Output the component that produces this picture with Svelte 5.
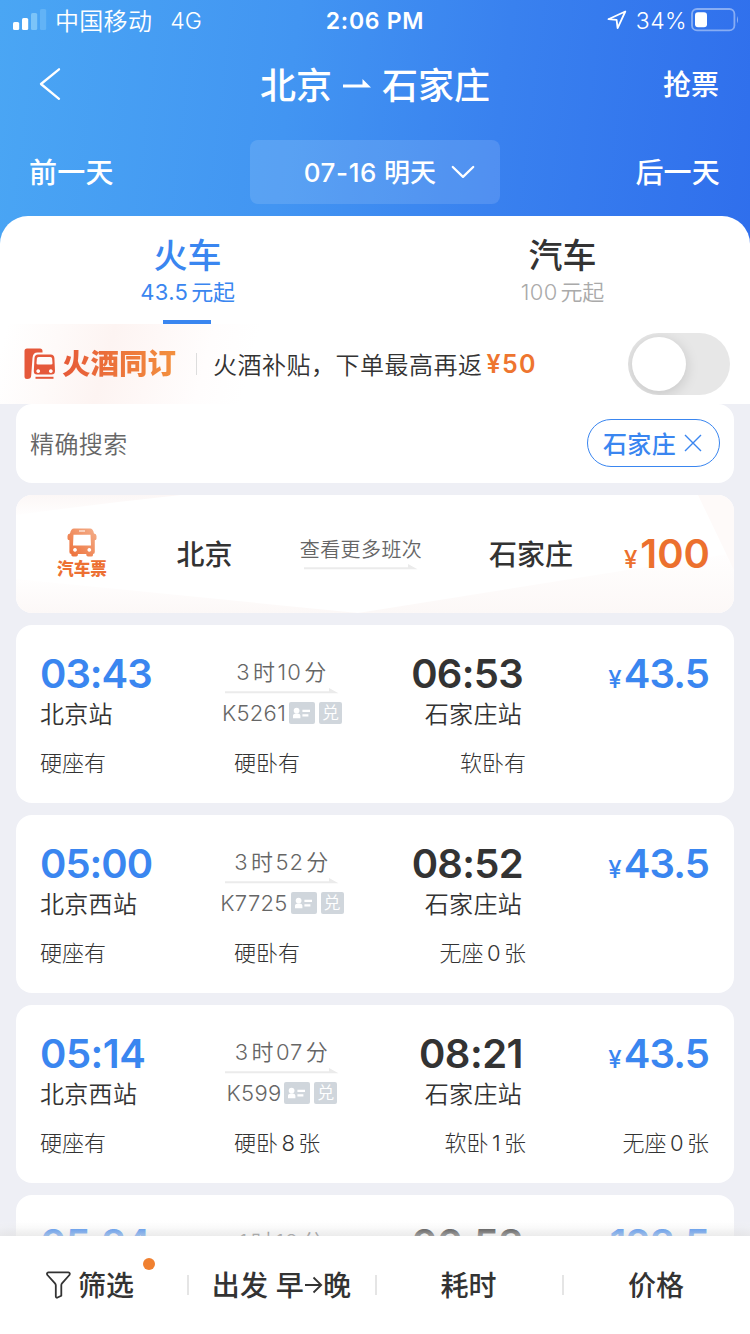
<script>
  const trains = [
    { dep: '03:43', arr: '06:53', dur: '3时10分', from: '北京站', to: '石家庄站', no: 'K5261', price: '43.5', seats: ['硬座有', '硬卧有', '软卧有'] },
    { dep: '05:00', arr: '08:52', dur: '3时52分', from: '北京西站', to: '石家庄站', no: 'K7725', price: '43.5', seats: ['硬座有', '硬卧有', '无座0张'] },
    { dep: '05:14', arr: '08:21', dur: '3时07分', from: '北京西站', to: '石家庄站', no: 'K599', price: '43.5', seats: ['硬座有', '硬卧8张', '软卧1张', '无座0张'] },
    { dep: '05:24', arr: '06:53', dur: '1时12分', price: '128.5' }
  ];
  const parts = (s) => s.match(/\d+|[^\d]+/g) ?? [];
</script>

{#snippet mixed(text)}
  {#each parts(text) as p}<span class:num={/\d/.test(p)}>{p}</span>{/each}
{/snippet}

{#snippet arrow()}
  <svg class="line" width="114" height="6" viewBox="0 0 114 6"><path d="M0 3.2H104V0L113.5 5.2H0Z" fill="#ebebeb" /></svg>
{/snippet}

<div class="page">
  <div class="top">
    <div class="status">
      <div class="carrier">
        <svg width="34" height="22" viewBox="0 0 34 22">
          <rect x="0" y="13" width="6.2" height="8" rx="1.6" fill="#fff" />
          <rect x="9" y="9" width="6.2" height="12" rx="1.6" fill="#fff" />
          <rect x="18" y="4" width="6.2" height="17" rx="1.6" fill="#7cc4f8" />
          <rect x="27" y="0" width="6.2" height="21" rx="1.6" fill="#62b3f6" />
        </svg>
        <span class="op">中国移动</span><span class="net">4G</span>
      </div>
      <span class="clock">2:06 PM</span>
      <div class="power">
        <svg width="20" height="20" viewBox="0 0 20 20" fill="none" stroke="#fff" stroke-width="1.8" stroke-linejoin="round"><path d="M18.3 1.5L1.4 9.2L9.6 9.9L10.6 18.2Z" /></svg>
        <span class="pct">34%</span>
        <svg width="49" height="24" viewBox="0 0 49 24">
          <rect x="1" y="1" width="42.4" height="21.4" rx="5" fill="none" stroke="#fff" stroke-opacity=".42" stroke-width="1.8" />
          <rect x="4" y="4.2" width="12" height="15" rx="3" fill="#fff" />
          <path d="M46 8q2 3.8 0 7.6z" fill="#fff" fill-opacity=".45" />
        </svg>
      </div>
    </div>
    <div class="title">
      <svg class="back" width="22" height="34" viewBox="0 0 22 34" fill="none" stroke="#fff" stroke-width="2.3" stroke-linecap="round" stroke-linejoin="round"><path d="M20 2.3L2 17L20 31.8" /></svg>
      <div class="route"><span>北京</span><svg width="28" height="10" viewBox="0 0 28 10"><path d="M0 5.6H19.5V0L28 8.6H0Z" fill="#fff" /></svg><span>石家庄</span></div>
      <span class="grab">抢票</span>
    </div>
    <div class="dates">
      <span class="day">前一天</span>
      <div class="picker"><span class="date"><i>07-16</i> 明天</span><svg width="24" height="14" viewBox="0 0 24 14" fill="none" stroke="#fff" stroke-width="2.3" stroke-linecap="round" stroke-linejoin="round"><path d="M1.8 2L12 11.8L22.2 2" /></svg></div>
      <span class="day next">后一天</span>
    </div>
    <div class="tabs">
      <div class="tab active"><b>火车</b><span class="from"><i>43.5</i>元起</span><div class="bar"></div></div>
      <div class="tab"><b>汽车</b><span class="from"><i>100</i>元起</span></div>
    </div>
  </div>

  <div class="promo">
    <svg width="31" height="32" viewBox="0 0 31 32">
      <path d="M3 .5H16Q18.5 .5 18.5 3V4.6H13.5Q9 4.6 8.5 10L7.2 27.5Q7.2 31 3 31Q.5 31 .5 28.5V3Q.5 .5 3 .5Z" fill="#e5583a" />
      <path fill-rule="evenodd" d="M14 6.5H26.8Q30 6.5 30.4 10L31 23Q31 26.6 27.5 26.6H13Q9.7 26.6 9.8 23L10.5 10Q10.8 6.5 14 6.5ZM14.5 9Q13 9 12.9 10.5L12.5 15.2Q12.4 16.6 14 16.6H27Q28.6 16.6 28.5 15.2L28.1 10.5Q28 9 26.4 9ZM14.2 21.2a1.9 1.9 0 1 0 .01 0M26.8 21.2a1.9 1.9 0 1 0 .01 0" fill="#e5583a" />
      <path d="M11.5 28.8H29.5V30.8H11.5Z" fill="#e5583a" />
    </svg>
    <span class="brand">火酒同订</span>
    <div class="sep"></div>
    <span class="desc">火酒补贴，下单最高再返</span><span class="fifty">¥50</span>
    <div class="switch"><div class="knob"></div></div>
  </div>

  <div class="list">
    <div class="search">
      <span class="hint">精确搜索</span>
      <div class="chip"><span>石家庄</span><svg width="18" height="18" viewBox="0 0 18 18" stroke="#3a86f0" stroke-width="1.4"><path d="M1 1L17 17M17 1L1 17" /></svg></div>
    </div>

    <div class="bus">
      <svg class="deco" width="718" height="118" viewBox="0 0 718 118">
        <defs>
          <linearGradient id="up" x1="0" y1="0" x2="0" y2="1"><stop offset="0" stop-color="#fcf7f6" /><stop offset="1" stop-color="#fffefe" /></linearGradient>
          <linearGradient id="down" x1="0" y1="0" x2="0" y2="1"><stop offset="0" stop-color="#fffefe" /><stop offset="1" stop-color="#fcf8f7" /></linearGradient>
        </defs>
        <path d="M0 0H165Q80 9 0 20Z" fill="url(#up)" />
        <path d="M0 84L342 118H0Z" fill="url(#down)" />
        <path d="M342 118L718 58V118Z" fill="url(#down)" />
        <path d="M682 0H718V75Z" fill="#fefaf9" />
      </svg>
      <div class="kind">
        <svg width="30" height="29" viewBox="0 0 30 29">
          <defs><linearGradient id="bus" x1="1" y1="0" x2="0" y2="1"><stop offset="0" stop-color="#f4b08c" /><stop offset="1" stop-color="#ed6d35" /></linearGradient></defs>
          <path fill-rule="evenodd" d="M7 .5H23Q26 .5 27 5.5Q29.5 5.8 29.5 8V10.5Q29.5 12.2 27.8 12.3V24Q27.8 26 26 26V27Q26 28.5 24.3 28.5H21Q19.2 28.5 19.2 26H11Q11 28.5 9.2 28.5H6Q4.2 28.5 4.2 26Q2.4 26 2.4 24V12.3Q.5 12.2 .5 10.5V8Q.5 5.8 3 5.5Q4 .5 7 .5ZM12 2.5V3.5H18V2.5ZM6.5 6.8L6 17.5H24L23.5 6.8ZM8 20a1.9 1.9 0 1 0 .01 0M22.3 20a1.9 1.9 0 1 0 .01 0" fill="url(#bus)" />
        </svg>
        <span>汽车票</span>
      </div>
      <span class="city a">北京</span>
      <div class="more"><span>查看更多班次</span>{@render arrow()}</div>
      <span class="city b">石家庄</span>
      <span class="price orange"><small>¥</small>100</span>
    </div>

    {#each trains as t}
      <div class="card">
        <div class="info">
          <div class="col">
            <span class="time blue" class:wide={t.dep.includes('1')}>{t.dep}</span>
            {#if t.from}<span class="station">{t.from}</span>{/if}
          </div>
          <div class="col mid">
            <span class="dur">{@render mixed(t.dur)}</span>
            {#if t.no}
              {@render arrow()}
              <div class="code"><span>{t.no}</span>
                <svg width="26" height="22" viewBox="0 0 26 22"><rect width="26" height="22" rx="2" fill="#d0d6dc" /><circle cx="7.6" cy="8.6" r="2.9" fill="#fff" /><path d="M4 16.2v-2.6q0-1.4 2.4-2h2.6q2.4.6 2.4 2v2.6zM13.4 7.8h7.6v2.2h-7.6zM13.4 12.2h6v2.2h-6z" fill="#fff" /></svg>
                <em>兑</em>
              </div>
            {/if}
          </div>
          <div class="col right">
            <span class="time" class:wide={t.arr.includes('1')}>{t.arr}</span>
            {#if t.to}<span class="station">{t.to}</span>{/if}
          </div>
          <span class="price blue"><small>¥</small>{t.price}</span>
        </div>
        {#if t.seats}
          <div class="seats">
            {#each t.seats as s}<div>{@render mixed(s)}</div>{/each}
          </div>
        {/if}
      </div>
    {/each}
  </div>

  <div class="nav">
    <div class="item first">
      <svg width="25" height="28" viewBox="0 0 25 28" fill="none" stroke="#333" stroke-width="1.8" stroke-linejoin="round"><path d="M2.4 1.4H22.3Q24.6 1.8 23.4 4L16 12.3Q15.3 13.2 15.3 14.3V24.8L11 26.8Q9.8 26.8 9.8 25.6V14.3Q9.8 13.2 9 12.3L1.4 4Q.2 1.8 2.4 1.4Z" /></svg>
      <span>筛选</span><div class="dot"></div>
    </div>
    <div class="rule"></div>
    <div class="item sort"><span>出发 早</span><svg width="18" height="18" viewBox="0 0 18 18" fill="none" stroke="#333" stroke-width="1.8"><path d="M0 9H16M8.5 1.5L16.2 9L8.5 16.5" /></svg><span>晚</span></div>
    <div class="rule"></div>
    <div class="item"><span>耗时</span></div>
    <div class="rule"></div>
    <div class="item"><span>价格</span></div>
  </div>
</div>

<style>
  :global(body) { margin: 0; }
  .page { width: 750px; height: 1334px; overflow: hidden; display: flex; flex-direction: column; font-family: Inter, "Noto Sans CJK SC", sans-serif; color: #333; background: #eeeff5; white-space: nowrap; }
  svg { display: block; flex: none; }
  i { font-style: normal; }
  .top { flex: none; height: 324px; color: #fff; background: linear-gradient(97deg, #4aa6f4 0%, #4295f2 38%, #3981ef 65%, #2f6eec 100%); }
  .status { height: 40px; display: grid; grid-template-columns: 250px 250px 250px; align-items: center; font-size: 24px; }
  .carrier { display: flex; align-items: center; padding-left: 13px; font-weight: 300; }
  .op { margin: -2px 0 0 8px; letter-spacing: .3px; font-weight: 350; }
  .net { margin: 2px 0 0 18px; font-size: 23px; font-weight: 350; }
  .clock { text-align: center; font-weight: 600; font-size: 23px; letter-spacing: .7px; padding-top: 2px; }
  .power { display: flex; align-items: center; justify-content: flex-end; padding-right: 10px; font-size: 23px; font-weight: 350; }
  .pct { margin: 2px 4px 0 9px; letter-spacing: .4px; }
  .title { height: 88px; display: grid; grid-template-columns: 200px 350px 200px; align-items: center; }
  .back { margin-left: 39px; }
  .route { display: flex; justify-content: center; align-items: center; gap: 11px; font-size: 36px; font-weight: 500; line-height: 40px; }
  .route span { padding-top: 4px; }
  .grab { text-align: right; padding-right: 31px; font-size: 28px; font-weight: 500; margin-top: -2px; }
  .dates { height: 88px; display: grid; grid-template-columns: 250px 250px 250px; align-items: center; }
  .day { padding-left: 29px; font-size: 28px; letter-spacing: .2px; font-weight: 500; margin-top: -2px; }
  .next { text-align: right; padding: 0 30px 0 0; }
  .picker { height: 64px; border-radius: 8px; background: rgba(255,255,255,.12); display: flex; align-items: center; justify-content: flex-end; gap: 15px; padding-right: 25px; font-size: 26px; font-weight: 500; box-sizing: border-box; }
  .date { margin-top: -4px; }
  .date i { letter-spacing: .6px; }
  .tabs { height: 108px; background: #fff; border-radius: 28px 28px 0 0; display: flex; }
  .tab { flex: 1; display: flex; flex-direction: column; align-items: center; color: #333; }
  .tab b { margin-top: 18px; line-height: 44px; font-size: 34px; font-weight: 500; }
  .from { color: #aaa; font-size: 22px; line-height: 30px; letter-spacing: -.2px; margin-top: -1px; font-weight: 350; }
  .from i { margin-right: 3px; letter-spacing: .3px; }
  .active b, .active .from { color: #3a86f0; }
  .active .from { font-weight: 400; }
  .bar { width: 48px; height: 4px; background: #3a86f0; margin: 13px 2px 0 0; }
  .promo { flex: none; height: 80px; box-sizing: border-box; padding: 0 20px 0 24px; display: flex; align-items: center; background: linear-gradient(105deg, #fff 1%, #fefaf9 8%, #fdf4f2 15%, #fef8f7 21%, #fffdfd 28%, #fff 34%) #fff; }
  .brand { margin: 0 0 0 7px; font-size: 28.5px; font-weight: 900; line-height: 40px; background: linear-gradient(90deg, #e65a38, #f3903f); -webkit-background-clip: text; background-clip: text; color: transparent; }
  .sep { width: 1px; height: 22px; background: #ddd; margin: 0 16px 0 20px; }
  .desc { font-size: 24px; letter-spacing: .5px; font-weight: 350; margin-top: -2px; }
  .fifty { margin-left: 4px; color: #ee752f; font-size: 25px; font-weight: 600; letter-spacing: 1.3px; }
  .switch { margin-left: auto; width: 102px; height: 62px; border-radius: 31px; background: #e7e7e7; display: flex; align-items: center; overflow: hidden; }
  .knob { width: 54px; height: 54px; margin-left: 4px; border-radius: 50%; background: #fff; box-shadow: 0 3px 14px rgba(0,0,0,.15); }
  .list { flex: 1; min-height: 0; overflow: hidden; padding: 0 16px; display: flex; flex-direction: column; gap: 12px; }
  .search { flex: none; height: 79px; border-radius: 16px; background: #fff; display: flex; justify-content: space-between; align-items: center; padding: 0 14px; }
  .hint { font-size: 24px; letter-spacing: .4px; color: #666; font-weight: 350; margin-top: -2px; }
  .chip { height: 46px; width: 131px; margin-top: -1px; border: 1px solid #3a86f0; border-radius: 24px; display: flex; align-items: center; justify-content: center; gap: 8px; color: #3a86f0; font-size: 24px; letter-spacing: .3px; font-weight: 500; }
  .chip span { margin-top: -1px; }
  .chip svg { margin-right: 2px; }
  .bus { flex: none; height: 118px; border-radius: 16px; background: #fff; overflow: hidden; position: relative; display: grid; grid-template-columns: 132px 113px 200px 112px 137px; align-items: center; }
  .deco { position: absolute; inset: 0; }
  .bus > :not(.deco) { position: relative; }
  .kind { display: flex; flex-direction: column; align-items: center; color: #ed7033; font-size: 16.6px; font-weight: 900; line-height: 24px; }
  .city { font-size: 28px; font-weight: 500; margin-top: -2px; }
  .a { text-align: center; }
  .b { text-align: right; }
  .more { display: flex; flex-direction: column; align-items: center; font-size: 20px; letter-spacing: .4px; line-height: 28px; color: #666; font-weight: 350; margin-top: -2px; }
  .price { text-align: right; font-size: 40px; font-weight: 600; line-height: 50px; letter-spacing: -.9px; padding-right: 1px; }
  .price small { font-size: 24px; font-weight: 500; margin-right: 3px; }
  .orange { color: #ec702e; padding: 6px 0 0; letter-spacing: 0; }
  .blue { color: #3a86f0; }
  .card { flex: none; height: 178px; box-sizing: border-box; border-radius: 16px; background: #fff; padding: 24px 24px 0; }
  .info { height: 96px; display: grid; grid-template-columns: 162px 160px 161px 187px; align-items: start; }
  .col { display: flex; flex-direction: column; }
  .time { font-size: 40px; font-weight: 600; line-height: 50px; letter-spacing: -1px; }
  .right .time { letter-spacing: -.7px; }
  .time.wide, .right .time.wide { letter-spacing: -.5px; }
  .station { font-size: 24px; line-height: 34px; letter-spacing: .3px; margin-top: -1px; font-weight: 350; }
  .mid { align-items: center; color: #666; }
  .dur { font-size: 22px; line-height: 32px; padding: 7px 4px 0 0; font-weight: 350; display: flex; }
  .dur .num { margin: 0 2.5px; letter-spacing: .9px; }
  .code { display: flex; align-items: center; gap: 4px; height: 32px; margin-top: 3px; font-size: 22px; font-weight: 350; letter-spacing: .3px; }
  .code > span { margin-right: -1px; }
  .code em { font-style: normal; width: 23px; height: 22px; border-radius: 2px; background: #d0d6dc; color: #fff; font-size: 17px; line-height: 22px; text-align: center; }
  .right { align-items: flex-end; }
  .right .station { padding-right: 1px; }
  .seats { display: grid; grid-template-columns: 194px 130px 162px 183px; font-size: 22px; line-height: 36px; font-weight: 300; }
  .seats .num { margin: 0 3.4px; }
  .seats div:nth-child(n+3) { text-align: right; }
  .nav { flex: none; height: 98px; position: relative; background: #fff; box-shadow: 0 -3px 12px rgba(0,0,0,.08); display: grid; grid-template-columns: 187px 2px 186px 2px 185px 2px 186px; align-items: center; font-size: 28px; font-weight: 500; line-height: 40px; }
  .nav::before { content: ""; position: absolute; left: 0; right: 0; bottom: 100%; height: 16px; background: linear-gradient(rgba(255,255,255,0), rgba(245,245,245,.22) 45%, rgba(232,232,232,.6)); }
  .item { display: flex; align-items: center; justify-content: center; }
  .item span { margin: 2px 2px 0 0; }
  .rule { height: 20px; background: #e5e5e5; }
  .first { position: relative; gap: 7px; padding-right: 5px; }
  .first span { margin-right: 0; }
  .first svg { margin-left: -2px; }
  .sort { letter-spacing: .2px; }
  .sort span { margin-right: 1px; }
  .dot { position: absolute; left: 143px; top: -6px; width: 12px; height: 12px; border-radius: 50%; background: #f08030; }
</style>
